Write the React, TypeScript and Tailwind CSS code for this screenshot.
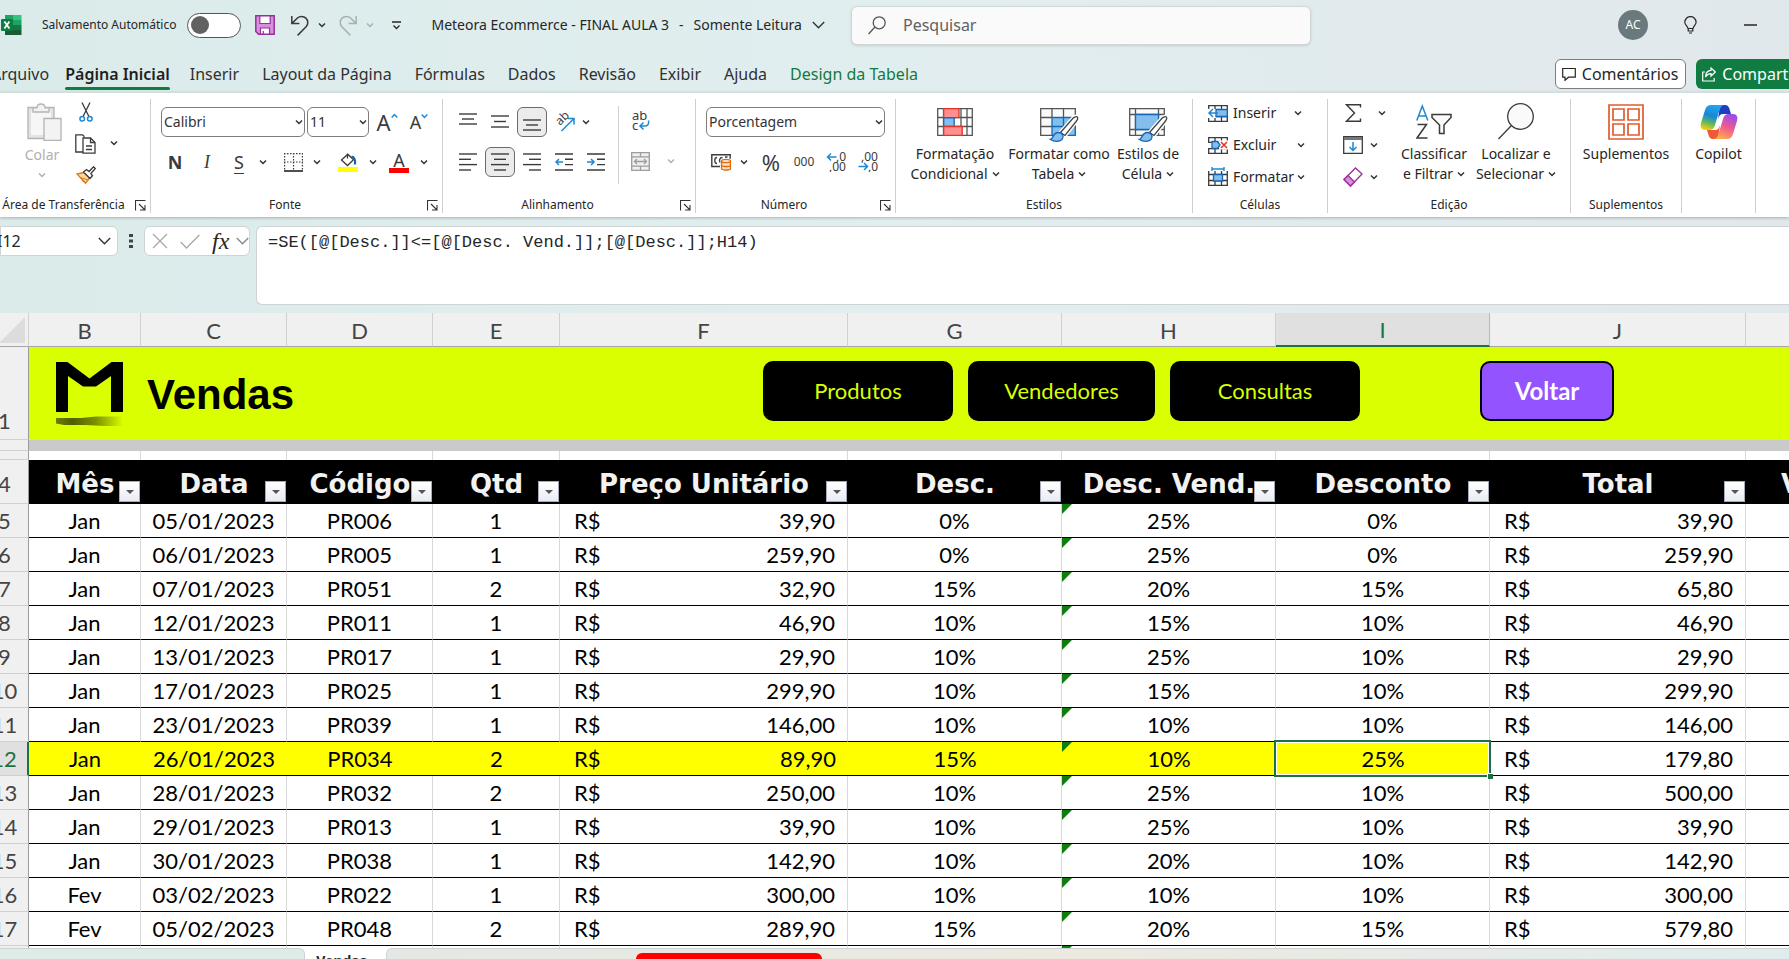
import React from "react";

const ink = "#3b3b3b";

/* ---------- icons ---------- */

function Chev({ className = "text-[#333]", s = 8 }: { className?: string; s?: number }) {
  return (
    <svg width={s} height={s} viewBox="0 0 8 8" fill="none" stroke="currentColor" strokeWidth="1.5" className={`shrink-0 ${className}`}>
      <path d="M1 2.5l3 3 3-3" />
    </svg>
  );
}

function BigChev({ className = "text-[#333]" }: { className?: string }) {
  return (
    <svg width="13" height="8" viewBox="0 0 13 8" fill="none" stroke="currentColor" strokeWidth="1.4" className={`shrink-0 ${className}`}>
      <path d="M.8 1l5.7 5.7L12.2 1" />
    </svg>
  );
}

function Launcher() {
  return (
    <button aria-label="Mais opções" className="shrink-0">
      <svg width="11" height="11" viewBox="0 0 11 11" fill="none" stroke="#333" strokeWidth="1.1">
        <path d="M.5 10.5V.5h10M4 4l6 6M10 5v5H5" />
      </svg>
    </button>
  );
}

function ExcelLogo() {
  return (
    <svg width="21" height="20" viewBox="0 0 21 20">
      <rect x="4" y="0" width="8.5" height="10" fill="#21a366" />
      <rect x="12" y="0" width="8.5" height="5" fill="#33c481" />
      <rect x="4" y="5" width="8.5" height="5" fill="#107c41" />
      <rect x="12" y="5" width="8.5" height="5" fill="#21a366" />
      <rect x="4" y="10" width="8.5" height="10" fill="#185c37" />
      <rect x="12" y="10" width="8.5" height="5" fill="#107c41" />
      <rect x="12" y="15" width="8.5" height="5" fill="#185c37" />
      <rect x="0" y="4" width="12" height="12" rx="1" fill="#107c41" />
      <path d="M3.4 6.5l5 7M8.4 6.5l-5 7" stroke="#fff" strokeWidth="1.8" />
    </svg>
  );
}

function SaveIcon() {
  return (
    <svg width="20" height="20" viewBox="0 0 20 20">
      <path d="M.8.8h18.4v18.4H3.5L.8 16.5z" fill="#d88fdc" stroke="#96309c" strokeWidth="1.5" />
      <path d="M4.8 1h10.4v7.5H4.8z" fill="#fff" stroke="#96309c" strokeWidth="1.2" />
      <path d="M5.5 19v-6h9v6z" fill="#fff" stroke="#96309c" strokeWidth="1.2" />
      <path d="M8.3 16v3" stroke="#96309c" strokeWidth="1.2" />
    </svg>
  );
}

function UndoIcon({ flip = false, color = ink }: { flip?: boolean; color?: string }) {
  return (
    <svg width="20" height="21" viewBox="0 0 20 21" fill="none" stroke={color} strokeWidth="1.5" className={flip ? "-scale-x-100" : ""}>
      <path d="M1.8 1v7.6h7.6M2 8.4L7.4 3a6.2 6.2 0 0 1 8.9 8.6L7.6 20.4" />
    </svg>
  );
}

function AlignIcon({ rows, color = ink }: { rows: [number, number, number][]; color?: string }) {
  return (
    <svg width="18" height="18" viewBox="0 0 18 18" stroke={color} strokeWidth="1.4">
      {rows.map(([x1, x2, y]) => (
        <path key={y} d={`M${x1} ${y}H${x2}`} />
      ))}
    </svg>
  );
}

function IndentIcon({ out = false }: { out?: boolean }) {
  return (
    <svg width="18" height="18" viewBox="0 0 18 18" fill="none" strokeWidth="1.4">
      <path d="M0 1h18M10 6.3h8M10 11.6h8M0 17h18" stroke={ink} />
      <path d={out ? "M8 9H1M4 6L1 9l3 3" : "M0 9h7M4 6l3 3-3 3"} stroke="#1e88d2" strokeWidth="1.5" />
    </svg>
  );
}

function PasteIcon() {
  return (
    <svg width="35" height="38" viewBox="0 0 35 38" stroke="#b4b4b4" strokeWidth="1.3">
      <path d="M1 4.5h26v31H1z" fill="#e3e3e3" />
      <path d="M4 8h20v24H4z" fill="#f6f6f6" stroke="none" />
      <path d="M6 9V4.8h4A4 4 0 0 1 14 1a4 4 0 0 1 4 3.8h4V9z" fill="#f2f2f2" />
      <path d="M17 15.500h17v22H17z" fill="#f3f3f3" />
    </svg>
  );
}

function CutIcon() {
  return (
    <svg width="14" height="20" viewBox="0 0 14 20" fill="none">
      <path d="M3 .5l6.800 13.800M11 .5L4.200 14.300" stroke={ink} strokeWidth="1.3" />
      <circle cx="3.200" cy="16.700" r="2.300" stroke="#1e88d2" strokeWidth="1.500" />
      <circle cx="10.800" cy="16.700" r="2.300" stroke="#1e88d2" strokeWidth="1.500" />
    </svg>
  );
}

function CopyIcon() {
  return (
    <svg width="21" height="20" viewBox="0 0 21 20" fill="none" stroke={ink} strokeWidth="1.3">
      <path d="M8 18H.8V.8h6.700l2 2" />
      <path d="M8 4h7.500l4.500 4.500v10.700H8z" fill="#fff" />
      <path d="M15.500 4v4.500H20M11 12h6M11 15.500h6" />
    </svg>
  );
}

function BrushIcon() {
  return (
    <svg width="20" height="18" viewBox="0 0 20 18" fill="none" strokeWidth="1.3">
      <path d="M1 8l7-1.500 5.500 5.500-4 5.300z" fill="#fbd9a6" stroke="#e07a14" />
      <path d="M4 11.500l8 2.500M6 14l4 3" stroke="#e07a14" />
      <path d="M7.500 6l3-2.500 2.500 2 4.500-4.700 1.800 1.700-4.500 5 1.700 2.300-2.500 2.700z" fill="#fff" stroke={ink} />
    </svg>
  );
}

function BordersIcon() {
  return (
    <svg width="19" height="19" viewBox="0 0 19 19" stroke={ink} fill="none">
      <path d="M.6 0v17M9.500 0v17M18.400 0v17M0 .6h19M0 9h19" strokeDasharray="1.500 1.500" strokeWidth="1.200" />
      <path d="M0 18h19" strokeWidth="1.800" />
    </svg>
  );
}

function BucketIcon() {
  return (
    <svg width="20" height="20" viewBox="0 0 20 20" fill="none">
      <path d="M9.500 1.500v5M3.500 8L9.800 2.200l5.700 5.600-6 5.700z" stroke={ink} strokeWidth="1.300" />
      <path d="M13.500 4.500c3.500.5 4 3 3.500 8" stroke="#1763a6" strokeWidth="2.200" />
      <rect y="15" width="20" height="5" fill="#ff0" />
    </svg>
  );
}

function OrientIcon() {
  return (
    <svg width="21" height="20" viewBox="0 0 21 20" fill="none">
      <text x="0" y="0" transform="translate(6 14) rotate(-45)" fontSize="12" fontFamily="Noto Sans, sans-serif" fill={ink}>ab</text>
      <path d="M7.500 19L19.500 7M14 6.500h6v6" stroke="#1e88d2" strokeWidth="1.500" />
    </svg>
  );
}

function WrapIcon() {
  return (
    <svg width="18" height="20" viewBox="0 0 18 20" fill="none">
      <text x="0" y="9" fontSize="13" fontFamily="Noto Sans, sans-serif" fill={ink}>ab</text>
      <text x="0" y="19" fontSize="13" fontFamily="Noto Sans, sans-serif" fill={ink}>c</text>
      <path d="M16.500 9.500c.8 4-1 5.500-4 5.500H8M11.500 11.500L8 15l3.500 3.500" stroke="#1e88d2" strokeWidth="1.500" />
    </svg>
  );
}

function MergeIcon() {
  return (
    <svg width="19" height="19" viewBox="0 0 19 19" fill="none" stroke="#9d9d9d" strokeWidth="1.300">
      <path d="M.7.7h17.600v17.600H.7z" fill="#efefef" />
      <path d="M.7 4.800h17.600M.7 14.200h17.600M9.500.7v4M9.500 14.200v4M3.500 9.500h12M6 7L3.500 9.500 6 12M13 7l2.500 2.500L13 12" />
    </svg>
  );
}

function CurrencyIcon() {
  return (
    <svg width="20" height="18" viewBox="0 0 20 18" fill="none">
      <path d="M9 13.500H.8V1.800h18.400v4" stroke={ink} strokeWidth="1.400" />
      <path d="M6 4.500c-3 0-3 6 0 6M11.500 4.500c-3 0-3.500 3-2.500 5M14 4h2.500" stroke={ink} strokeWidth="1.300" />
      <path d="M10.500 8v7.500c0 2 9 2 9 0V8" fill="#fbe0c4" stroke="#dd6b0d" strokeWidth="1.300" />
      <ellipse cx="15" cy="8" rx="4.500" ry="1.700" fill="#fbe0c4" stroke="#dd6b0d" strokeWidth="1.300" />
      <path d="M10.500 12c0 2 9 2 9 0" stroke="#dd6b0d" strokeWidth="1.300" />
    </svg>
  );
}

function DecimalIcon({ more = false }: { more?: boolean }) {
  return (
    <svg width="21" height="20" viewBox="0 0 21 20" fill="none" fontSize="12" fontFamily="Noto Sans, sans-serif">
      <text x={more ? 10 : 3} y="9" fill={ink}>{more ? ",0" : ",00"}</text>
      <text x={more ? 3 : 10} y="19" fill={ink}>{more ? ",00" : ",0"}</text>
      <path d={more ? "M10.500 5H1.500M5 1.500L1.500 5 5 8.500" : "M.5 14.500h9M6 11l3.500 3.500L6 18"} stroke="#1e88d2" strokeWidth="1.500" />
    </svg>
  );
}

function CondIcon() {
  return (
    <svg width="36" height="28" viewBox="0 0 36 28" fill="none" strokeWidth="1.300">
      <path d="M.7.7h34.600v26.600H.7zM.7 9.500h34.600M.7 18.500h34.600M6.500.7v26.600M24 .7v26.600M30 .7v26.600" stroke="#555" fill="#fff" />
      <path d="M6.700.7H22v9H6.700z" fill="#ff8f90" stroke="#e33428" />
      <path d="M6.700 9.800h10.500v8.500H6.700z" fill="#83beec" stroke="#1667b7" />
      <path d="M6.700 18.500h18.500v8.800H6.700z" fill="#ff8f90" stroke="#e33428" />
    </svg>
  );
}

function PaintBrush() {
  return (
    <>
      <path d="M20.500 24.500L33 10.300c1.500-1.700 4-2 4.500-1s0 2.500-1 3.700L25 27.500z" fill="#fff" stroke="#fff" strokeWidth="4" />
      <path d="M20.500 24.500L33 10.300c1.500-1.700 4-2 4.500-1s0 2.500-1 3.700L25 27.500z" fill="#fff" stroke="#444" strokeWidth="1.300" />
      <path d="M10.500 31.500c2.500 0 2-7 8-7 4 0 6 4 3.500 7-2.500 2.500-8 2.500-11.500 0z" fill="#83beec" stroke="#1667b7" strokeWidth="1.300" />
    </>
  );
}

function TableIcon() {
  return (
    <svg width="39" height="35" viewBox="0 0 39 35" fill="none" strokeWidth="1.300">
      <path d="M.7.7h34.600v26.600H.7z" fill="#fafafa" stroke="#555" />
      <path d="M12 9.500h23.300v17.800H12z" fill="#83beec" />
      <path d="M.7 9.500H12M.7 18.500H12M12 .7v9M23.500 .7v9" stroke="#555" />
      <path d="M12 9.500h23.300v17.800H12zM12 18.500h23.300M23.500 9.500v17.800" stroke="#1667b7" />
      <PaintBrush />
    </svg>
  );
}

function StylesIcon() {
  return (
    <svg width="39" height="35" viewBox="0 0 39 35" fill="none" strokeWidth="1.300">
      <path d="M.7.7h34.600v26.600H.7zM.7 6.500h34.600M.7 21.500h34.600M6.500.7v26.600M29.500.7v26.600" fill="#fafafa" stroke="#555" />
      <path d="M6.500 6.500h23v15h-23z" fill="#83beec" stroke="#1667b7" />
      <PaintBrush />
    </svg>
  );
}

function CellsIcon({ kind }: { kind: "in" | "del" | "fmt" }) {
  return (
    <svg width="20" height="20" viewBox="0 0 20 20" fill="none" strokeWidth="1.300">
      <path d="M.7 2.700h18.600v15.600H.7zM7 2.700v15.600M13.500 2.700v15.600M.7 7.500h18.600M.7 13.500h18.600" stroke={ink} />
      {kind === "in" && (
        <>
          <path d="M0 6h8v9H0z" fill="#fff" />
          <path d="M8 6.500h11.300v7H8z" fill="#83beec" stroke="#1667b7" />
          <path d="M10 10H1M5 6l-4 4 4 4" stroke="#1e88d2" strokeWidth="1.500" />
        </>
      )}
      {kind === "del" && (
        <>
          <path d="M11 5.500h9v9h-9z" fill="#fff" />
          <path d="M0 8h4v5H0z" fill="#fff" />
          <path d="M4 6.500h5.500l2.500 3.500-2.500 3.500H4z" fill="#83beec" stroke="#1667b7" />
          <path d="M13 7l6 6M19 7l-6 6" stroke="#e33428" strokeWidth="1.600" />
        </>
      )}
      {kind === "fmt" && (
        <>
          <path d="M0 0h20v4H0z" fill="#fff" />
          <path d="M5.500 7.500h9v6.500h-9z" fill="#83beec" stroke="#1667b7" />
          <path d="M4 2h12M4 0v4M16 0v4" stroke="#1e88d2" strokeWidth="1.400" />
        </>
      )}
    </svg>
  );
}

function CopilotIcon() {
  return (
    <svg width="38" height="36" viewBox="0 0 38 36">
      <defs>
        <linearGradient id="cpA" x1=".6" y1="0" x2=".3" y2="1">
          <stop offset="0" stopColor="#1ea7f2" />
          <stop offset=".45" stopColor="#1b86d8" />
          <stop offset=".72" stopColor="#58b860" />
          <stop offset="1" stopColor="#f6cf12" />
        </linearGradient>
        <linearGradient id="cpB" x1=".7" y1="0" x2=".3" y2="1">
          <stop offset="0" stopColor="#9a4cf0" />
          <stop offset=".5" stopColor="#ee5a90" />
          <stop offset="1" stopColor="#ffb04a" />
        </linearGradient>
      </defs>
      <path d="M20 1h5c2.500 0 3.700 1.500 4.500 4l1.500 5h-8c-3 0-4 2-5 5z" fill="#1c3fc4" />
      <path d="M18 35h-5c-2.500 0-3.700-1.500-4.500-4L7 26h8c3 0 4-2 5-5z" fill="#ef5a35" />
      <path d="M11 1h14c-3 0-4.500 2-5.500 5l-4.500 15c-1 3.500-2.500 5-5.500 5H5c-4 0-5-3-4-7L5 6c1-3.500 3-5 6-5z" fill="url(#cpA)" />
      <path d="M27 35H13c3 0 4.500-2 5.500-5L23 15c1-3.500 2.500-5 5.500-5H33c4 0 5 3 4 7l-4 13c-1 3.500-3 5-6 5z" fill="url(#cpB)" />
    </svg>
  );
}

function MeteoraLogo() {
  return (
    <svg width="67" height="66" viewBox="0 0 67 66" className="shrink-0">
      <defs>
        <linearGradient id="shade" x1="0" x2="1">
          <stop offset="0" stopColor="#6d7d00" />
          <stop offset=".25" stopColor="#515e00" />
          <stop offset=".6" stopColor="#7d9100" />
          <stop offset="1" stopColor="#d9ff00" />
        </linearGradient>
      </defs>
      <path d="M0 0h11.500L33.500 16.500 55.500 0H67v50H55V14L40 24.500H27L12 14v36H0z" fill="#000" />
      <path d="M0 56h25l15-1.500h27V64H48l-18-1H8l-8-1.500z" fill="url(#shade)" />
    </svg>
  );
}

/* ---------- ribbon pieces ---------- */

function Group({ className, label, launcher, children }: { className: string; label: string; launcher?: boolean; children: React.ReactNode }) {
  return (
    <section aria-label={label || "Copilot"} className={`flex shrink-0 flex-col border-r border-[#cfcfcf] ${className}`}>
      <div className="h-[98px]">{children}</div>
      <div className="flex h-4 items-center">
        <span className="flex-1 whitespace-nowrap text-center text-xs">{label}</span>
        {launcher && <span className="ml-2 mr-1 flex"><Launcher /></span>}
      </div>
    </section>
  );
}

function IconBtn({ label, className = "w-8", active = false, children }: { label: string; className?: string; active?: boolean; children: React.ReactNode }) {
  return (
    <button aria-label={label} className={`flex h-[30px] shrink-0 items-center justify-center ${className}`}>
      {active ? <span className="flex size-[30px] items-center justify-center rounded-md border border-[#6a6a6a] bg-[#ececec]">{children}</span> : children}
    </button>
  );
}

function BigBtn({ icon, a, b, className }: { icon: React.ReactNode; a: string; b?: string; className: string }) {
  return (
    <button className={`flex shrink-0 flex-col items-center whitespace-nowrap text-sm leading-5 ${className}`}>
      <span className="flex h-[45px] items-center justify-center">{icon}</span>
      <span>{a}</span>
      {b && <span className="flex items-center gap-1">{b}<Chev /></span>}
    </button>
  );
}

function Combo({ label, value, className }: { label: string; value: string; className: string }) {
  return (
    <span className={`relative flex ${className}`}>
      <select aria-label={label} defaultValue={value} className="h-[30px] w-full appearance-none rounded-md border border-[#7d7d7d] bg-white pl-0.5 text-sm text-[#333]">
        <option>{value}</option>
      </select>
      <span className="pointer-events-none absolute right-0.5 top-[11px]"><Chev /></span>
    </span>
  );
}

const Sep = () => <span className="h-[30px] w-px shrink-0 bg-[#cfcfcf]" />;

/* ---------- sheet data ---------- */

type Row = [string, string, string, number, string, string, string, string, string];
const rows: Row[] = [
  ["Jan", "05/01/2023", "PR006", 1, "39,90", "0%", "25%", "0%", "39,90"],
  ["Jan", "06/01/2023", "PR005", 1, "259,90", "0%", "25%", "0%", "259,90"],
  ["Jan", "07/01/2023", "PR051", 2, "32,90", "15%", "20%", "15%", "65,80"],
  ["Jan", "12/01/2023", "PR011", 1, "46,90", "10%", "15%", "10%", "46,90"],
  ["Jan", "13/01/2023", "PR017", 1, "29,90", "10%", "25%", "10%", "29,90"],
  ["Jan", "17/01/2023", "PR025", 1, "299,90", "10%", "15%", "10%", "299,90"],
  ["Jan", "23/01/2023", "PR039", 1, "146,00", "10%", "10%", "10%", "146,00"],
  ["Jan", "26/01/2023", "PR034", 2, "89,90", "15%", "10%", "25%", "179,80"],
  ["Jan", "28/01/2023", "PR032", 2, "250,00", "10%", "25%", "10%", "500,00"],
  ["Jan", "29/01/2023", "PR013", 1, "39,90", "10%", "25%", "10%", "39,90"],
  ["Jan", "30/01/2023", "PR038", 1, "142,90", "10%", "20%", "10%", "142,90"],
  ["Fev", "03/02/2023", "PR022", 1, "300,00", "10%", "10%", "10%", "300,00"],
  ["Fev", "05/02/2023", "PR048", 2, "289,90", "15%", "20%", "15%", "579,80"],
];
const heads = ["Mês", "Data", "Código", "Qtd", "Preço Unitário", "Desc.", "Desc. Vend.", "Desconto", "Total"];
const letters = ["B", "C", "D", "E", "F", "G", "H", "I", "J"];

const rowHead = "border-b border-r border-b-[#d0d0d0] border-r-[#9b9b9b] bg-[#f0f0f0] p-0 text-center font-normal text-[#444]";

function Money({ v }: { v: string }) {
  return <span className="flex justify-between pl-3.5 pr-3"><span>R$</span><span>{v}</span></span>;
}

function ErrorMark() {
  return (
    <svg width="10" height="10" viewBox="0 0 10 10" className="absolute left-0 top-0"><path d="M0 0h10L0 10z" fill="#107c10" /></svg>
  );
}

function TitleBar() {
  return (
    <header className="flex h-[50px] shrink-0 items-center pr-8 text-[#262626]">
      <span className="ml-px"><ExcelLogo /></span>
      <label htmlFor="autosave" className="ml-5 whitespace-nowrap text-xs">Salvamento Automático</label>
      <input id="autosave" type="checkbox" role="switch" className="peer sr-only" />
      <label htmlFor="autosave" aria-hidden="true" className="ml-[11px] flex h-[25px] w-[54px] shrink-0 items-center rounded-full border border-[#555] bg-white pl-[3px]">
        <span className="size-[18px] rounded-full bg-[#616161]" />
      </label>
      <button aria-label="Salvar" className="ml-3.5"><SaveIcon /></button>
      <button aria-label="Desfazer" className="ml-[15px] flex items-center gap-2"><UndoIcon /><Chev /></button>
      <button aria-label="Refazer" className="ml-3 flex items-center gap-2"><UndoIcon flip color="#a9b0b0" /><Chev className="text-[#a9b0b0]" /></button>
      <button aria-label="Personalizar" className="ml-[18px]">
        <svg width="9" height="9" viewBox="0 0 9 9" fill="none" stroke="#262626" strokeWidth="1.3"><path d="M0 1h9M1.500 4.500l3 3 3-3" /></svg>
      </button>
      <button className="ml-[30px] flex items-center gap-2.5 whitespace-nowrap text-sm">
        <span>Meteora Ecommerce - FINAL AULA 3</span>
        <span>-</span>
        <span>Somente Leitura</span>
        <BigChev />
      </button>
      <label className="ml-auto mr-[307px] flex h-[39px] w-[460px] items-center gap-[17px] rounded-md border border-[#cfd6d6] bg-[#fafafa] pl-4 shadow-sm">
        <svg width="18" height="19" viewBox="0 0 18 19" fill="none" stroke="#555" strokeWidth="1.300"><circle cx="11.200" cy="6.800" r="6" /><path d="M7 11l-6.500 7" /></svg>
        <input aria-label="Pesquisar" placeholder="Pesquisar" className="min-w-0 flex-1 bg-transparent text-base outline-none placeholder:text-[#616161]" />
      </label>
      <button aria-label="Conta" className="flex size-[30px] shrink-0 items-center justify-center rounded-full bg-[#69797e] text-xs text-white">AC</button>
      <button aria-label="Dicas" className="ml-9">
        <svg width="13" height="18" viewBox="0 0 13 18" fill="none" stroke="#262626" strokeWidth="1.200"><path d="M4 12.500C3.500 10 .8 9 .8 6.200a5.600 5.600 0 0 1 11.300 0C12.100 9 9.500 10 9 12.500zM4.200 12.500V15h4.600v-2.500M5 17h3" /></svg>
      </button>
      <button aria-label="Minimizar" className="ml-[47px]"><svg width="13" height="2"><path d="M0 1h13" stroke="#262626" strokeWidth="1.500" /></svg></button>
    </header>
  );
}

function Tabs() {
  const tabs = ["Inserir", "Layout da Página", "Fórmulas", "Dados", "Revisão", "Exibir", "Ajuda"];
  return (
    <nav className="-ml-[9px] flex h-[42px] shrink-0 items-center whitespace-nowrap pt-1.5 text-base text-[#303030]">
      <a href="#arquivo">Arquivo</a>
      <a href="#inicio" className="relative ml-4 mr-5 font-semibold text-[#1f1f1f]">Página Inicial<span className="absolute inset-x-0 -bottom-1 h-[3px] rounded bg-[#107c41]" /></a>
      <div className="flex gap-[23px]">
        {tabs.map((t) => <a key={t} href="#aba">{t}</a>)}
        <a href="#design" className="text-[#137a40]">Design da Tabela</a>
      </div>
      <button className="ml-auto flex h-[30px] shrink-0 items-center gap-1.5 rounded-md border border-[#7d7d7d] bg-white pl-1.5 pr-[7px] text-[#262626]">
        <svg width="14" height="14" viewBox="0 0 14 14" fill="none" stroke="#262626" strokeWidth="1.200"><path d="M.7 1.500h12.600v8.700H6.500L3 13.300v-3.100H.7z" /></svg>
        Comentários
      </button>
      <button className="-mr-[49px] ml-2.5 flex h-[30px] shrink-0 items-center gap-1.5 rounded-md bg-[#107c41] pl-1.5 pr-4 text-white">
        <svg width="14" height="15" viewBox="0 0 14 15" fill="none" stroke="#fff" strokeWidth="1.200"><path d="M3 5H.7v9h11.500v-3M9 1l4.300 4L9 9V6.700C6.500 6.700 5 7.500 3.500 10 3.700 6 6 3.500 9 3.300z" /></svg>
        Compartilhar
      </button>
    </nav>
  );
}

function Ribbon() {
  return (
    <div className="z-10 flex h-[125px] shrink-0 items-start border-t border-[#d3dede] bg-white pt-1.5 text-[#262626] shadow-[0_1px_3px_rgba(0,0,0,0.25)]">
      <Group className="w-[151px]" label="Área de Transferência" launcher>
        <div className="flex">
          <button className="ml-6 flex w-9 flex-col items-center text-sm text-[#b0b0b0]">
            <span className="ml-1 mt-1"><PasteIcon /></span>
            <span className="mt-1">Colar</span>
            <span className="mt-1.5"><Chev className="text-[#b0b0b0]" /></span>
          </button>
          <div className="ml-[15px] flex flex-col items-center gap-3 pt-[3px]">
            <button aria-label="Recortar"><CutIcon /></button>
            <button aria-label="Copiar"><CopyIcon /></button>
            <button aria-label="Pincel de formatação"><BrushIcon /></button>
          </div>
          <span className="ml-3.5 mt-10"><Chev /></span>
        </div>
      </Group>

      <Group className="w-[292px]" label="Fonte" launcher>
        <div className="flex items-center pl-2.5 pt-2">
          <Combo label="Fonte" value="Calibri" className="w-36" />
          <Combo label="Tamanho" value="11" className="ml-0.5 w-[62px]" />
          <IconBtn label="Aumentar fonte" className="ml-0.5 w-8">
            <span className="text-[22px] leading-none text-[#3b3b3b]">A</span>
            <svg width="7" height="6" viewBox="0 0 7 6" fill="none" stroke="#1e88d2" strokeWidth="1.500" className="mb-3"><path d="M.7 4.500l2.800-3 2.800 3" /></svg>
          </IconBtn>
          <IconBtn label="Diminuir fonte">
            <span className="text-lg leading-none text-[#3b3b3b]">A</span>
            <svg width="7" height="6" viewBox="0 0 7 6" fill="none" stroke="#1e88d2" strokeWidth="1.500" className="mb-3"><path d="M.7 1.500l2.800 3 2.800-3" /></svg>
          </IconBtn>
        </div>
        <div className="flex items-center pl-2 pt-2.5 text-lg text-[#3b3b3b]">
          <IconBtn label="Negrito"><b>N</b></IconBtn>
          <IconBtn label="Itálico"><i className="font-['Liberation_Serif',serif]">I</i></IconBtn>
          <IconBtn label="Sublinhado"><span className="underline underline-offset-4">S</span></IconBtn>
          <IconBtn label="Opções de sublinhado" className="w-4"><Chev /></IconBtn>
          <span className="ml-1"><Sep /></span>
          <IconBtn label="Bordas" className="ml-0.5 w-8"><BordersIcon /></IconBtn>
          <IconBtn label="Opções de borda" className="w-4"><Chev /></IconBtn>
          <span className="ml-[5px]"><Sep /></span>
          <IconBtn label="Cor de preenchimento" className="ml-0.5 w-8"><BucketIcon /></IconBtn>
          <IconBtn label="Opções de preenchimento" className="w-[18px]"><Chev /></IconBtn>
          <IconBtn label="Cor da fonte" className="w-[34px]">
            <span className="flex flex-col items-center"><span className="text-lg leading-4">A</span><span className="h-[5px] w-5 bg-[#f00]" /></span>
          </IconBtn>
          <IconBtn label="Opções de cor" className="w-4"><Chev /></IconBtn>
        </div>
      </Group>

      <Group className="w-[253px]" label="Alinhamento" launcher>
        <div className="flex">
          <div className="w-[175px] pl-[9px]">
            <div className="flex pt-2">
              <IconBtn label="Alinhar em cima"><AlignIcon rows={[[0, 18, 1], [3, 15, 6], [0, 18, 11]]} /></IconBtn>
              <IconBtn label="Alinhar no meio"><AlignIcon rows={[[0, 18, 3], [3, 15, 8.5], [0, 18, 14]]} /></IconBtn>
              <IconBtn label="Alinhar embaixo" active><AlignIcon rows={[[0, 18, 7], [3, 15, 12], [0, 18, 17]]} /></IconBtn>
              <IconBtn label="Orientação"><OrientIcon /></IconBtn>
              <IconBtn label="Opções de orientação" className="w-3"><Chev /></IconBtn>
            </div>
            <div className="flex pt-2.5">
              <IconBtn label="Alinhar à esquerda"><AlignIcon rows={[[0, 18, 1], [0, 12, 6.3], [0, 18, 11.600], [0, 12, 17]]} /></IconBtn>
              <IconBtn label="Centralizar" active><AlignIcon rows={[[0, 18, 1], [3, 15, 6.3], [0, 18, 11.600], [3, 15, 17]]} /></IconBtn>
              <IconBtn label="Alinhar à direita"><AlignIcon rows={[[0, 18, 1], [6, 18, 6.3], [0, 18, 11.600], [6, 18, 17]]} /></IconBtn>
              <IconBtn label="Diminuir recuo"><IndentIcon out /></IconBtn>
              <IconBtn label="Aumentar recuo"><IndentIcon /></IconBtn>
            </div>
          </div>
          <div className="mt-[7px] h-[78px] border-l border-[#cfcfcf] pl-1.5">
            <IconBtn label="Quebrar texto"><WrapIcon /></IconBtn>
            <div className="flex pt-2.5">
              <IconBtn label="Mesclar" className="w-[30px]"><MergeIcon /></IconBtn>
              <IconBtn label="Opções de mesclagem" className="ml-1.5 w-5"><Chev className="text-[#b0b0b0]" /></IconBtn>
            </div>
          </div>
        </div>
      </Group>

      <Group className="w-[200px]" label="Número" launcher>
        <div className="px-2.5 pt-2"><Combo label="Formato de número" value="Porcentagem" className="w-full" /></div>
        <div className="flex pl-2.5 pt-2.5 text-[#3b3b3b]">
          <IconBtn label="Moeda" className="w-[30px]"><CurrencyIcon /></IconBtn>
          <IconBtn label="Opções de moeda" className="w-4"><Chev /></IconBtn>
          <IconBtn label="Porcentagem" className="w-[38px]"><span className="text-[22px]">%</span></IconBtn>
          <IconBtn label="Separador de milhar" className="w-7"><span className="text-xs">000</span></IconBtn>
          <span className="ml-0.5"><Sep /></span>
          <IconBtn label="Aumentar casas decimais" className="w-8"><DecimalIcon more /></IconBtn>
          <IconBtn label="Diminuir casas decimais"><DecimalIcon /></IconBtn>
        </div>
      </Group>

      <Group className="w-[297px]" label="Estilos">
        <div className="flex pl-1.5">
          <BigBtn icon={<CondIcon />} a="Formatação" b="Condicional" className="w-[106px]" />
          <BigBtn icon={<span className="mt-2"><TableIcon /></span>} a="Formatar como" b="Tabela" className="w-[102px]" />
          <BigBtn icon={<span className="mt-2"><StylesIcon /></span>} a="Estilos de" b="Célula" className="w-[76px]" />
        </div>
      </Group>

      <Group className="w-[135px]" label="Células">
        <div className="flex flex-col pl-[15px] text-sm">
          <button className="flex h-7 items-center"><CellsIcon kind="in" /><span className="ml-[5px] w-[61px] text-left">Inserir</span><Chev /></button>
          <button className="mt-1 flex h-7 items-center"><CellsIcon kind="del" /><span className="ml-[5px] w-16 text-left">Excluir</span><Chev /></button>
          <button className="mt-1 flex h-7 items-center"><CellsIcon kind="fmt" /><span className="ml-[5px] w-16 text-left">Formatar</span><Chev /></button>
        </div>
      </Group>

      <Group className="w-[243px]" label="Edição">
        <div className="flex">
          <div className="flex w-[66px] flex-col pl-[15px]">
            <button aria-label="AutoSoma" className="flex h-7 items-center gap-4 pl-0.5">
              <svg width="17" height="18" viewBox="0 0 17 18" fill="none" stroke={ink} strokeWidth="1.400"><path d="M15.500 3.500V.8H1.500L9.500 9l-8 8.200h14v-2.700" /></svg>
              <Chev />
            </button>
            <button aria-label="Preencher" className="mt-1 flex h-7 items-center gap-[7px]">
              <svg width="20" height="18" viewBox="0 0 20 18" fill="none" strokeWidth="1.300"><path d="M.7.700h18.600v16.600H.7z" stroke={ink} /><path d="M1 2.500h18" stroke="#777" strokeWidth="3" /><path d="M10 6v8.500M6.500 11l3.500 3.500 3.500-3.500" stroke="#1e88d2" strokeWidth="1.500" /></svg>
              <Chev />
            </button>
            <button aria-label="Limpar" className="mt-1 flex h-7 items-center gap-[7px]">
              <svg width="20" height="20" viewBox="0 0 20 20" fill="none" stroke="#96309c" strokeWidth="1.300"><path d="M1 12.500L12.500 1l6.500 6L7.500 19z" fill="#fff" /><path d="M1 12.500l4-4 6.500 6.500-4 4z" fill="#d88fdc" /></svg>
              <Chev />
            </button>
          </div>
          <BigBtn
            className="w-20"
            a="Classificar"
            b="e Filtrar"
            icon={
              <svg width="36" height="36" viewBox="0 0 36 36" fill="none" strokeWidth="1.500">
                <path d="M.8 16.500L6.300 2l5.500 14.500M2.500 12h7.600" stroke="#1e88d2" />
                <path d="M1.500 20.500h9L1 34h10.500" stroke={ink} />
                <path d="M16 10.500h19v3L28 21v8.500h-4.500V21L16 13.500z" stroke={ink} fill="#fafafa" />
              </svg>
            }
          />
          <BigBtn
            className="w-[84px]"
            a="Localizar e"
            b="Selecionar"
            icon={<svg width="36" height="37" viewBox="0 0 36 37" fill="none" stroke={ink} strokeWidth="1.300"><circle cx="22.500" cy="13.500" r="12.800" fill="#fafafa" /><path d="M13.500 22.500L.5 36" /></svg>}
          />
        </div>
      </Group>

      <Group className="w-[111px]" label="Suplementos">
        <BigBtn
          className="w-full"
          a="Suplementos"
          icon={<svg width="36" height="36" viewBox="0 0 36 36" fill="none" stroke="#e05c2e" strokeWidth="1.700"><path d="M1 1h34v34H1zM5 5h11v11H5zM20 5h11v11H20zM5 20h11v11H5zM20 20h11v11H20z" /></svg>}
        />
      </Group>
      <Group className="w-[74px]" label="">
        <BigBtn className="w-full" a="Copilot" icon={<CopilotIcon />} />
      </Group>
    </div>
  );
}

function FormulaBar() {
  return (
    <div className="flex h-24 shrink-0 items-start pt-[9px]">
      <div className="flex h-[30px] w-[118px] items-center rounded-r-md border border-[#cfd3d3] bg-white pr-1.5">
        <input aria-label="Caixa de nome" defaultValue="I12" className="-ml-1 w-24 min-w-0 flex-1 bg-transparent text-base text-[#262626] outline-none" />
        <BigChev />
      </div>
      <svg width="4" height="14" viewBox="0 0 4 14" fill="#444" className="mx-[11px] mt-2 shrink-0"><path d="M0 0h4v3H0zM0 5.500h4v3H0zM0 11h4v3H0z" /></svg>
      <div className="flex h-[30px] w-[106px] shrink-0 items-center rounded-md border border-[#cfd3d3] bg-white pl-[7px]">
        <button aria-label="Cancelar"><svg width="16" height="16" viewBox="0 0 16 16" stroke="#a8a8a8" strokeWidth="1.300"><path d="M1 1l14 14M15 1L1 15" /></svg></button>
        <button aria-label="Inserir" className="ml-3"><svg width="20" height="15" viewBox="0 0 20 15" fill="none" stroke="#a8a8a8" strokeWidth="1.300"><path d="M.7 8l5.800 6L19.300 1" /></svg></button>
        <button aria-label="Inserir função" className="ml-3 font-['Liberation_Serif',serif] text-2xl italic leading-6 text-[#262626]">fx</button>
        <span className="ml-[7px]"><BigChev className="text-[#8a8a8a]" /></span>
      </div>
      <textarea
        aria-label="Barra de fórmulas"
        defaultValue="=SE([@[Desc.]]<=[@[Desc. Vend.]];[@[Desc.]];H14)"
        className="ml-1.5 h-[79px] min-w-0 flex-1 resize-none rounded-l-md border border-r-0 border-[#cfd3d3] bg-white py-[5px] pl-[11px] font-['Liberation_Mono',monospace] text-[17px] leading-[22px] text-[#262626] outline-none"
      />
    </div>
  );
}

function Sheet() {
  const grid = "border-r border-[#d9d9d9]";
  return (
    <main className="min-h-0 flex-1 overflow-hidden bg-white font-['Lato',sans-serif] text-[22px] leading-7 text-black">
      <table className="-ml-[19px] w-[calc(100%+19px)] table-fixed border-separate border-spacing-0">
        <colgroup>
          <col className="w-12" />
          <col className="w-28" />
          <col className="w-[146px]" />
          <col className="w-[146px]" />
          <col className="w-[127px]" />
          <col className="w-72" />
          <col className="w-[214px]" />
          <col className="w-[214px]" />
          <col className="w-[214px]" />
          <col className="w-64" />
          <col />
        </colgroup>
        <thead>
          <tr className="h-[34px] bg-[#f0f0f0]">
            <th aria-label="Selecionar tudo" className="border-b border-r border-b-[#a6a6a6] border-r-[#d0d0d0] p-0">
              <svg width="26" height="26" viewBox="0 0 26 26" className="ml-[18px]"><path d="M26 0v26H0z" fill="#dcdcdc" /></svg>
            </th>
            {letters.map((l) =>
              l === "I" ? (
                <th key={l} className="border-b-2 border-r border-b-[#1e7145] border-r-[#b8b8b8] bg-[#e0e0e0] p-0 pt-0.5 font-normal text-[#1e7145]">{l}</th>
              ) : (
                <th key={l} className="border-b border-r border-b-[#a6a6a6] border-r-[#d0d0d0] p-0 pt-0.5 font-normal text-[#444]">{l}</th>
              )
            )}
            <th className="border-b border-[#a6a6a6] p-0" />
          </tr>
        </thead>
        <tbody>
          <tr className="h-[93px]">
            <th className={`${rowHead} pb-1 align-bottom`}>1</th>
            <td colSpan={10} className="bg-[#d9ff00] p-0">
              <div className="flex items-center pl-[27px] pt-0.5">
                <MeteoraLogo />
                <h1 className="ml-6 w-[616px] font-['Liberation_Sans',sans-serif] text-[42px] font-bold leading-none">Vendas</h1>
                <div className="mb-2 flex gap-[15px] text-[#d9ff00]">
                  <button className="h-[60px] w-[190px] rounded-[10px] bg-black">Produtos</button>
                  <button className="h-[60px] w-[187px] rounded-[10px] bg-black">Vendedores</button>
                  <button className="h-[60px] w-[190px] rounded-[10px] bg-black">Consultas</button>
                </div>
                <button className="mb-2 ml-[120px] h-[60px] w-[134px] rounded-[10px] border-2 border-black bg-[#9353ff] text-2xl font-bold text-white">Voltar</button>
              </div>
            </td>
          </tr>
          <tr className="h-[11px]">
            <th className={rowHead} />
            <td colSpan={10} className="bg-[#cacaca] p-0" />
          </tr>
          <tr className="h-[9px]">
            <th className={rowHead} />
            {letters.map((l) => <td key={l} className={`${grid} p-0`} />)}
            <td className="p-0" />
          </tr>
          <tr className="h-11 bg-black font-['DejaVu_Sans',sans-serif] text-[26px] text-[#f2f2f2]">
            <th className={`${rowHead} pt-1 font-['Lato',sans-serif] text-[22px]`}>4</th>
            {heads.map((h) => (
              <th key={h} className="relative whitespace-nowrap p-0 pt-1 font-bold">
                {h}
                <button aria-label={`Filtrar ${h}`} className="absolute bottom-0.5 right-px flex size-[21px] items-center justify-center border border-[#a5abb8] bg-linear-to-b from-white to-[#e9ecf4]">
                  <svg width="8" height="4" viewBox="0 0 8 4"><path d="M0 0h8L4 4z" fill="#555" /></svg>
                </button>
              </th>
            ))}
            <th className="overflow-hidden whitespace-nowrap p-0 pl-[35px] pt-1 text-left font-bold">Vendedor</th>
          </tr>
          {rows.map((r, i) => {
            const sel = i === 7;
            const line = "h-[34px] border-b border-b-black p-0 text-center";
            const hl = sel ? "bg-[#ff0]" : "border-r border-r-[#d9d9d9]";
            return (
              <tr key={i}>
                <th className={sel ? "border-b border-r-2 border-b-[#d0d0d0] border-r-[#1e7145] bg-[#e0e0e0] p-0 text-center font-normal text-[#1e7145]" : rowHead}>{i + 5}</th>
                <td className={`${line} ${hl}`}>{r[0]}</td>
                <td className={`${line} ${hl}`}>{r[1]}</td>
                <td className={`${line} ${hl}`}>{r[2]}</td>
                <td className={`${line} ${hl}`}>{r[3]}</td>
                <td className={`${line} ${hl}`}><Money v={r[4]} /></td>
                <td className={`${line} ${hl}`}>{r[5]}</td>
                <td className={`${line} ${hl} relative`}><ErrorMark />{r[6]}</td>
                <td className={`${line} ${hl} relative`}>
                  {sel && (
                    <span className="pointer-events-none absolute -bottom-0.5 -left-0.5 -right-px -top-0.5 z-10 border-2 border-[#1e7145] ring-1 ring-inset ring-white">
                      <span className="absolute -bottom-1 -right-1 size-1.5 border-l border-t border-white bg-[#1e7145]" />
                    </span>
                  )}
                  {r[7]}
                </td>
                <td className={`${line} border-r border-r-[#d9d9d9]`}><Money v={r[8]} /></td>
                <td className={line} />
              </tr>
            );
          })}
          <tr className="h-[34px]">
            <th className={rowHead} />
            {letters.map((l) => <td key={l} className={`${grid} relative p-0`}>{l === "H" && <ErrorMark />}</td>)}
            <td className="p-0" />
          </tr>
        </tbody>
      </table>
    </main>
  );
}

function SheetTabs() {
  return (
    <footer className="flex h-[11px] shrink-0 items-start overflow-hidden bg-white text-sm">
      <div className="flex h-8 w-[305px] shrink-0 justify-end rounded-tr-md border-r border-t border-[#cdd2d2] bg-[#dfece6] pt-2.5">
        <span className="mr-[110px] h-5 w-px bg-[#c0c8c4]" />
      </div>
      <a href="#vendas" className="w-[81px] shrink-0 pr-2 pt-[3px] text-center font-bold text-[#262626]">Vendas</a>
      <div className="flex h-8 flex-1 rounded-tl-md border-l border-t border-[#cdd2d2] bg-linear-to-r from-[#e4e8e4] via-[#ece9e0] to-[#e1eced]">
        <span className="ml-1 mt-2.5 h-5 w-px bg-[#c8c8c4]" />
        <span className="ml-[129px] mt-2.5 h-5 w-px bg-[#c8c8c4]" />
        <span className="ml-[109px] mt-2.5 h-5 w-px bg-[#c8c8c4]" />
        <span className="ml-1 mt-1 h-6 w-[186px] rounded-t-md bg-[#f00]" />
        <span className="ml-[5px] mt-2.5 h-5 w-px bg-[#c8c8c4]" />
      </div>
    </footer>
  );
}

export default function App() {
  return (
    <div className="flex h-screen w-full flex-col overflow-hidden bg-linear-to-r from-[#dbebea] via-[#e1eeef] to-[#e1e8ec] font-['Noto_Sans','Open_Sans',sans-serif]">
      <TitleBar />
      <Tabs />
      <Ribbon />
      <FormulaBar />
      <Sheet />
      <SheetTabs />
    </div>
  );
}
